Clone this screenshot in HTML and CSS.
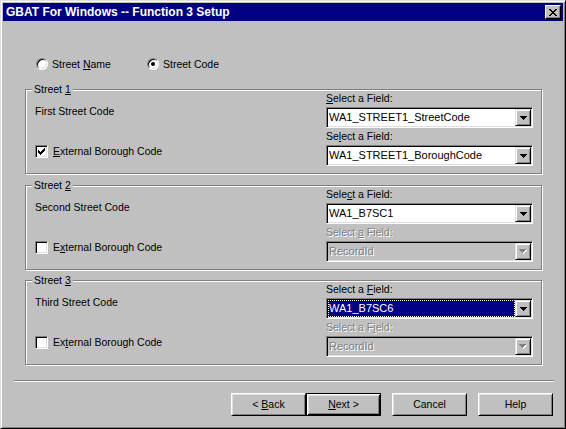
FILE: index.html
```html
<!DOCTYPE html>
<html>
<head>
<meta charset="utf-8">
<title>GBAT For Windows -- Function 3 Setup</title>
<link rel="stylesheet" href="styles.css">
</head>
<body>
<div class="window">
  <div class="titlebar">
    <span class="title">GBAT For Windows -- Function 3 Setup</span>
    <span class="close"><svg width="8" height="7" viewBox="0 0 8 7" shape-rendering="crispEdges"><path fill="#000" d="M0 0h2v1H0zM6 0h2v1H6zM1 1h2v1H1zM5 1h2v1H5zM2 2h4v1H2zM3 3h2v1H3zM2 4h4v1H2zM1 5h2v1H1zM5 5h2v1H5zM0 6h2v1H0zM6 6h2v1H6z"/></svg></span>
  </div>
  <div class="client">
    <div class="radios">
      <div class="radio-item first"><span class="radio"></span><span>Street <u>N</u>ame</span></div>
      <div class="radio-item"><span class="radio on"></span><span>Street Code</span></div>
    </div>

    <div class="group">
      <div class="group-title">Street <u>1</u></div>
      <div class="left">
        <div class="desc">First Street Code</div>
        <div class="check-row"><span class="check"><svg width="7" height="7" viewBox="0 0 7 7" shape-rendering="crispEdges"><path fill="#000" d="M6 0h1v3H6zM5 1h1v3H5zM4 2h1v3H4zM3 3h1v3H3zM2 4h1v3H2zM1 3h1v3H1zM0 2h1v3H0z"/></svg></span><span><u>E</u>xternal Borough Code</span></div>
      </div>
      <div class="right">
        <div class="field-label"><u>S</u>elect a Field:</div>
        <div class="combo"><span class="value">WA1_STREET1_StreetCode</span><span class="drop"><svg width="7" height="4" viewBox="0 0 7 4" shape-rendering="crispEdges"><path fill="#000" d="M0 0h7v1H0zM1 1h5v1H1zM2 2h3v1H2zM3 3h1v1H3z"/></svg></span></div>
        <div class="field-label second">Se<u>l</u>ect a Field:</div>
        <div class="combo"><span class="value">WA1_STREET1_BoroughCode</span><span class="drop"><svg width="7" height="4" viewBox="0 0 7 4" shape-rendering="crispEdges"><path fill="#000" d="M0 0h7v1H0zM1 1h5v1H1zM2 2h3v1H2zM3 3h1v1H3z"/></svg></span></div>
      </div>
    </div>

    <div class="group">
      <div class="group-title">Street <u>2</u></div>
      <div class="left">
        <div class="desc">Second Street Code</div>
        <div class="check-row"><span class="check"></span><span>E<u>x</u>ternal Borough Code</span></div>
      </div>
      <div class="right">
        <div class="field-label">Sele<u>c</u>t a Field:</div>
        <div class="combo"><span class="value">WA1_B7SC1</span><span class="drop"><svg width="7" height="4" viewBox="0 0 7 4" shape-rendering="crispEdges"><path fill="#000" d="M0 0h7v1H0zM1 1h5v1H1zM2 2h3v1H2zM3 3h1v1H3z"/></svg></span></div>
        <div class="field-label second disabled">Select <u>a</u> Field:</div>
        <div class="combo disabled"><span class="value">RecordId</span><span class="drop"><svg width="8" height="5" viewBox="0 0 8 5" shape-rendering="crispEdges"><path fill="#fff" d="M1 1h7v1H1zM2 2h5v1H2zM3 3h3v1H3zM4 4h1v1H4z"/><path fill="#808080" d="M0 0h7v1H0zM1 1h5v1H1zM2 2h3v1H2zM3 3h1v1H3z"/></svg></span></div>
      </div>
    </div>

    <div class="group">
      <div class="group-title">Street <u>3</u></div>
      <div class="left">
        <div class="desc">Third Street Code</div>
        <div class="check-row"><span class="check"></span><span>Ex<u>t</u>ernal Borough Code</span></div>
      </div>
      <div class="right">
        <div class="field-label">Select a <u>F</u>ield:</div>
        <div class="combo focused"><span class="value">WA1_B7SC6</span><span class="drop"><svg width="7" height="4" viewBox="0 0 7 4" shape-rendering="crispEdges"><path fill="#000" d="M0 0h7v1H0zM1 1h5v1H1zM2 2h3v1H2zM3 3h1v1H3z"/></svg></span></div>
        <div class="field-label second disabled">Select a F<u>i</u>eld:</div>
        <div class="combo disabled"><span class="value">RecordId</span><span class="drop"><svg width="8" height="5" viewBox="0 0 8 5" shape-rendering="crispEdges"><path fill="#fff" d="M1 1h7v1H1zM2 2h5v1H2zM3 3h3v1H3zM4 4h1v1H4z"/><path fill="#808080" d="M0 0h7v1H0zM1 1h5v1H1zM2 2h3v1H2zM3 3h1v1H3z"/></svg></span></div>
      </div>
    </div>

    <div class="separator"></div>

    <div class="buttons">
      <button class="btn">&lt; <u>B</u>ack</button>
      <button class="btn default"><u>N</u>ext &gt;</button>
      <button class="btn spaced">Cancel</button>
      <button class="btn spaced">Help</button>
    </div>
  </div>
</div>
</body>
</html>
```
FILE: styles.css
```css
* { box-sizing: border-box; }
html, body { margin: 0; padding: 0; }
body {
  width: 566px;
  height: 429px;
  overflow: hidden;
  background: #c0c0c0;
  font-family: "Liberation Sans", Arial, sans-serif;
  font-size: 10.5px;
  color: #000;
}
u { text-decoration: underline; text-underline-offset: 1px; }

.window {
  width: 566px;
  height: 429px;
  background: #c0c0c0;
  border: 1px solid;
  border-color: #dfdfdf #000 #000 #dfdfdf;
  box-shadow: inset 1px 1px 0 #fff, inset -1px -1px 0 #808080;
  padding: 2px;
  display: flex;
  flex-direction: column;
}

.titlebar {
  flex: none;
  height: 18px;
  background: #000080;
  color: #fff;
  display: flex;
  align-items: center;
  justify-content: space-between;
  padding: 0 2px 0 3px;
}
.title { font-weight: bold; font-size: 12px; line-height: 18px; }
.close {
  width: 16px;
  height: 14px;
  background: #c0c0c0;
  border: 1px solid;
  border-color: #fff #000 #000 #fff;
  box-shadow: inset -1px -1px 0 #808080;
  display: flex;
  align-items: center;
  justify-content: center;
  padding-right: 1px;
}
.close svg { display: block; }

.client { flex: 1; padding-top: 37px; }

.radios {
  display: flex;
  align-items: center;
  height: 12px;
  margin-left: 33px;
}
.radio-item { display: flex; align-items: center; gap: 4px; line-height: 12px; }
.radio-item.first { width: 111px; }
.radio {
  position: relative;
  width: 12px;
  height: 12px;
  border-radius: 50%;
  background: #fff;
  border: 1px solid;
  border-color: #808080 #fff #fff #808080;
  box-shadow: inset 1px 1px 0 #000, inset -1px -1px 0 #dfdfdf;
}
.radio.on::after {
  content: "";
  position: absolute;
  left: 3px;
  top: 3px;
  width: 4px;
  height: 4px;
  border-radius: 50%;
  background: #000;
}

.group {
  position: relative;
  margin: 19px 0 0 22px;
  width: 517px;
  height: 85px;
  border: 1px solid #808080;
  box-shadow: 1px 1px 0 #fff, inset 1px 1px 0 #fff;
  display: flex;
  justify-content: space-between;
  padding: 0 8px 0 9px;
}
.group + .group { margin-top: 11px; }
.group + .group + .group { margin-top: 10px; }
.group-title {
  position: absolute;
  left: 6px;
  top: -7px;
  padding: 0 2px;
  background: #c0c0c0;
  line-height: 13px;
}

.left { display: flex; flex-direction: column; }
.desc { margin-top: 15px; line-height: 13px; }
.check-row {
  margin-top: 27px;
  display: flex;
  align-items: center;
  gap: 5px;
  height: 13px;
  line-height: 13px;
}
.check {
  width: 13px;
  height: 13px;
  background: #fff;
  border: 1px solid;
  border-color: #808080 #fff #fff #808080;
  box-shadow: inset 1px 1px 0 #000, inset -1px -1px 0 #dfdfdf;
  display: flex;
  align-items: center;
  justify-content: center;
}
.check svg { display: block; }

.right { width: 207px; padding-top: 2px; display: flex; flex-direction: column; }
.field-label { line-height: 13px; }
.field-label.second { margin-top: 2px; }
.disabled.field-label { color: #808080; text-shadow: 1px 1px 0 #fff; }

.combo {
  margin-top: 2px;
  height: 21px;
  border: 1px solid;
  border-color: #808080 #fff #fff #808080;
  box-shadow: inset 1px 1px 0 #000, inset -1px -1px 0 #dfdfdf;
  padding: 1px;
  background: #fff;
  display: flex;
}
.field-label.second + .combo { margin-top: 2px; }
.combo .value {
  flex: 1;
  font-size: 11px;
  line-height: 17px;
  padding-left: 1px;
  white-space: nowrap;
  overflow: hidden;
}
.combo.focused .value {
  background: #000080;
  color: #fff;
  outline: 1px dotted #fff;
  outline-offset: -1px;
}
.combo.disabled { background: #c0c0c0; }
.combo.disabled .value { color: #808080; text-shadow: 1px 1px 0 #fff; }
.drop {
  flex: none;
  width: 16px;
  height: 17px;
  background: #c0c0c0;
  border: 1px solid;
  border-color: #dfdfdf #000 #000 #dfdfdf;
  box-shadow: inset 1px 1px 0 #fff, inset -1px -1px 0 #808080;
  display: flex;
  align-items: center;
  justify-content: center;
}
.drop svg { display: block; }

.separator {
  margin: 15px 0 0 11px;
  width: 540px;
  height: 2px;
  border-top: 1px solid #808080;
  border-bottom: 1px solid #fff;
}

.buttons { display: flex; margin: 11px 0 0 228px; }
.btn {
  width: 75px;
  height: 23px;
  padding: 0;
  margin: 0;
  font-family: "Liberation Sans", Arial, sans-serif;
  font-size: 10.5px;
  color: #000;
  background: #c0c0c0;
  border: 1px solid;
  border-color: #fff #000 #000 #fff;
  box-shadow: inset 1px 1px 0 #dfdfdf, inset -1px -1px 0 #808080;
  border-radius: 0;
  line-height: 21px;
  text-align: center;
}
.btn.default {
  border: 1px solid #000;
  box-shadow: inset 1px 1px 0 #fff, inset -1px -1px 0 #000, inset 2px 2px 0 #dfdfdf, inset -2px -2px 0 #808080;
}
.btn.spaced { margin-left: 11px; }
```
